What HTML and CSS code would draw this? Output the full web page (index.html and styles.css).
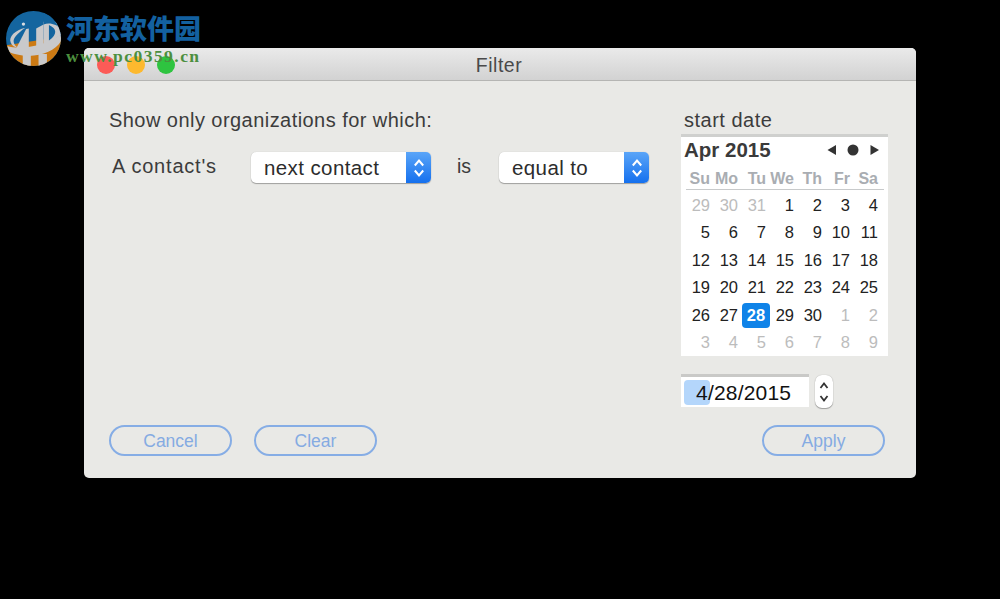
FILE: index.html
```html
<!DOCTYPE html>
<html lang="en">
<head>
<meta charset="utf-8">
<title>Filter</title>
<link rel="stylesheet" href="styles.css">
</head>
<body>
<div class="window">
  <div class="titlebar">
    <div class="lights">
      <span class="light red"></span>
      <span class="light yellow"></span>
      <span class="light green"></span>
    </div>
    <div class="title">Filter</div>
  </div>
  <div class="content">
    <div class="left">
      <div class="heading">Show only organizations for which:</div>
      <div class="rule">
        <span class="rule-label">A contact's</span>
        <div class="select select-field">
          <span class="select-text">next contact</span>
          <span class="select-arrows">
            <svg width="10" height="20" viewBox="0 0 10 20"><path d="M.8 7.500 5 2.500 9.200 7.500M.8 12.500 5 17.500 9.200 12.500"/></svg>
          </span>
        </div>
        <span class="rule-is">is</span>
        <div class="select select-op">
          <span class="select-text">equal to</span>
          <span class="select-arrows">
            <svg width="10" height="20" viewBox="0 0 10 20"><path d="M.8 7.500 5 2.500 9.200 7.500M.8 12.500 5 17.500 9.200 12.500"/></svg>
          </span>
        </div>
      </div>
      <div class="actions">
        <button class="btn">Cancel</button>
        <button class="btn">Clear</button>
      </div>
    </div>
    <div class="right">
      <div class="date-label">start date</div>
      <div class="calendar">
        <div class="cal-head">
          <span class="cal-month">Apr 2015</span>
          <span class="cal-nav">
            <svg width="60" height="12" viewBox="0 0 60 12"><path d="M2.500 6 11 1V11Z"/><circle cx="28" cy="6" r="5.500"/><path d="M54 6 45.500 1V11Z"/></svg>
          </span>
        </div>
        <div class="cal-week">
          <span>Su</span><span>Mo</span><span>Tu</span><span>We</span><span>Th</span><span>Fr</span><span>Sa</span>
        </div>
        <div class="cal-days">
          <span class="muted">29</span><span class="muted">30</span><span class="muted">31</span><span>1</span><span>2</span><span>3</span><span>4</span>
          <span>5</span><span>6</span><span>7</span><span>8</span><span>9</span><span>10</span><span>11</span>
          <span>12</span><span>13</span><span>14</span><span>15</span><span>16</span><span>17</span><span>18</span>
          <span>19</span><span>20</span><span>21</span><span>22</span><span>23</span><span>24</span><span>25</span>
          <span>26</span><span>27</span><span class="today">28</span><span>29</span><span>30</span><span class="muted">1</span><span class="muted">2</span>
          <span class="muted">3</span><span class="muted">4</span><span class="muted">5</span><span class="muted">6</span><span class="muted">7</span><span class="muted">8</span><span class="muted">9</span>
        </div>
      </div>
      <div class="date-row">
        <div class="date-input"><span class="date-sel"></span><span class="date-text">4/28/2015</span></div>
        <div class="stepper">
          <svg width="10" height="26" viewBox="0 0 10 26"><path d="M1.500 9 5 4.500 8.500 9M1.500 17 5 21.500 8.500 17"/></svg>
        </div>
      </div>
      <div class="apply-row">
        <button class="btn">Apply</button>
      </div>
    </div>
  </div>
</div>

<div class="watermark">
  <svg class="wm-logo" width="55" height="55" viewBox="18 18 164 164">
    <defs><clipPath id="disc"><circle cx="100" cy="100" r="82"/></clipPath></defs>
    <g clip-path="url(#disc)">
      <rect x="18" y="18" width="164" height="164" fill="#14659f"/>
      <path d="M18 120 182 95V182H18Z" fill="#cc7a14"/>
      <path d="M22 122C50 132 130 130 182 86V108C165 135 130 150 85 152 60 150 40 146 28 140Z" fill="#c9c9cb"/>
      <path d="M50 127 62 103 78 72 86 70V132H50Z" fill="#c9c9cb"/>
      <path d="M108 70 130 58V128H108Z" fill="#c9c9cb"/>
      <path d="M130 50H182V88L140 118H130Z" fill="#c9c9cb"/>
      <path d="M146 60C170 70 172 88 146 106Z" fill="#14659f"/>
      <path d="M130 18H182V70C170 60 150 50 130 58Z" fill="#14659f"/>
      <path d="M76 68C45 75 25 95 32 112 36 122 44 126 52 127 40 118 36 105 48 92 55 84 65 75 76 68Z" fill="#c9c9cb"/>
      <circle cx="70" cy="57" r="5" fill="#d8dde2"/>
      <path d="M68 148H92V182H68ZM115 146H140V182H115Z" fill="#c9c9cb"/>
    </g>
  </svg>
  <div class="wm-text">
    <div class="wm-cn">河东软件园</div>
    <div class="wm-url">www.pc0359.cn</div>
  </div>
</div>
</body>
</html>
```
FILE: styles.css
```css
* { box-sizing: border-box; }
html, body { margin: 0; height: 100%; }
body {
  background: #000;
  font-family: "Liberation Sans", Arial, sans-serif;
  color: #3c3c3c;
  overflow: hidden;
  padding: 48px 0 0 84px;
}
.window {
  width: 832px;
  height: 430px;
  background: #e9e9e6;
  border-radius: 5px;
  display: flex;
  flex-direction: column;
  overflow: hidden;
}
.titlebar {
  height: 33px;
  flex: none;
  background: linear-gradient(#eaeaea, #d2d2d2);
  border-bottom: 1px solid #b5b5b3;
  display: flex;
  align-items: center;
  padding: 0 0 0 13px;
  position: relative;
}
.lights { display: flex; gap: 12px; margin-top: 1px; }
.light { width: 18px; height: 18px; border-radius: 50%; }
.red { background: #fc5b57; }
.yellow { background: #fdb92e; }
.green { background: #2ec440; }
.title {
  position: absolute;
  inset: 0 2px 0 0;
  text-align: center;
  font-size: 19.500px;
  letter-spacing: .5px;
  line-height: 35px;
  color: #4a4a4a;
}
.content {
  flex: 1;
  display: flex;
  padding: 0 28px 0 25px;
}
.left { width: 572px; display: flex; flex-direction: column; }
.heading { font-size: 20px; letter-spacing: .45px; line-height: 24px; margin-top: 27px; }
.rule { display: flex; align-items: center; margin-top: 20px; height: 31px; }
.rule-label { font-size: 20px; letter-spacing: .8px; width: 142px; padding-left: 3px; margin-top: -2px; }
.rule-is { font-size: 19.500px; width: 68px; padding-left: 26px; margin-top: -2px; }
.select {
  height: 31px;
  background: #fff;
  border-radius: 5px;
  box-shadow: 0 1px 1px rgba(0,0,0,.3), 0 0 1px rgba(0,0,0,.2);
  display: flex;
  justify-content: space-between;
  overflow: hidden;
}
.select-field { width: 180px; }
.select-op { width: 150px; }
.select-text { font-size: 20.500px; letter-spacing: .4px; line-height: 32px; padding-left: 13px; color: #2c2c2c; }
.select-arrows {
  width: 25px;
  background: linear-gradient(#5aa5f8, #1570ee);
  display: flex;
  align-items: center;
  justify-content: center;
  padding: 1px 0 0 1px;
}
.select-arrows svg path { fill: none; stroke: #fff; stroke-width: 2; }
.actions { margin-top: auto; margin-bottom: 22px; display: flex; gap: 22px; }
.btn {
  width: 123px;
  height: 31px;
  border: 2px solid #86ade5;
  border-radius: 16px;
  background: transparent;
  color: #85abe2;
  font: 17.500px "Liberation Sans", Arial, sans-serif;
  padding: 1px 0 0;
}
.right { width: 207px; display: flex; flex-direction: column; }
.date-label { font-size: 20px; letter-spacing: .5px; line-height: 24px; margin-top: 27px; padding-left: 3px; }
.calendar {
  width: 207px;
  height: 222px;
  margin-top: 2px;
  background: #fff;
  border-top: 3px solid #cfd0ce;
  padding: 1px 3px 0;
}
.cal-head { display: flex; justify-content: space-between; align-items: center; height: 24px; }
.cal-month { font-size: 20.500px; font-weight: bold; color: #3a3a3a; }
.cal-nav { display: flex; }
.cal-nav svg path, .cal-nav svg circle { fill: #333; }
.cal-week {
  display: grid;
  grid-template-columns: repeat(7, 28px);
  margin: 4px 0 0 2px;
  width: 198px;
  height: 24px;
  border-bottom: 1px solid #c8cacb;
  font-size: 16px;
  font-weight: bold;
  line-height: 25px;
  text-align: right;
  color: #a9adb2;
}
.cal-week span { padding-right: 4px; }
.cal-days {
  display: grid;
  grid-template-columns: repeat(7, 28px);
  grid-auto-rows: 27.400px;
  margin: 2px 0 0 2px;
  font-size: 16.500px;
  line-height: 27px;
  text-align: right;
  color: #222;
}
.cal-days span { padding-right: 4px; }
.cal-days .muted { color: #bcbcbc; }
.cal-days .today {
  background: #0f83e8;
  color: #fff;
  font-weight: bold;
  border-radius: 4px;
  height: 25px;
  line-height: 24px;
  margin-top: 1px;
  padding: 0;
  text-align: center;
}
.date-row { display: flex; align-items: center; margin-top: 17px; gap: 6px; }
.date-input {
  width: 128px;
  height: 33px;
  background: #fff;
  border-top: 3px solid #c9c9c7;
  font-size: 21px;
  letter-spacing: .2px;
  line-height: 32px;
  color: #111;
  padding-left: 15px;
  position: relative;
}
.date-sel {
  position: absolute;
  left: 3px;
  top: 3px;
  width: 26px;
  height: 25px;
  background: #b4d6fb;
  border-radius: 4px;
}
.date-text { position: relative; }
.stepper {
  width: 18px;
  height: 33px;
  margin-top: 2px;
  background: #fff;
  border-radius: 7px;
  box-shadow: 0 1px 1px rgba(0,0,0,.3), 0 0 1px rgba(0,0,0,.3);
  display: flex;
  align-items: center;
  justify-content: center;
}
.stepper svg path { fill: none; stroke: #333; stroke-width: 1.800; }
.apply-row { display: flex; justify-content: flex-end; padding-right: 3px; margin-top: auto; margin-bottom: 22px; }
.watermark {
  position: absolute;
  left: 6px;
  top: 11px;
  display: flex;
  gap: 5px;
}
.wm-logo { display: block; }
.wm-cn {
  font-family: "Noto Sans CJK SC", sans-serif;
  font-weight: 900;
  font-size: 27px;
  line-height: 30px;
  color: #1361a0;
  margin-top: 2px;
}
.wm-url {
  font-family: "Liberation Serif", serif;
  font-weight: bold;
  font-size: 17.500px;
  line-height: 18px;
  letter-spacing: 1.450px;
  color: #4c8f3f;
  margin-top: 4px;
}
```
